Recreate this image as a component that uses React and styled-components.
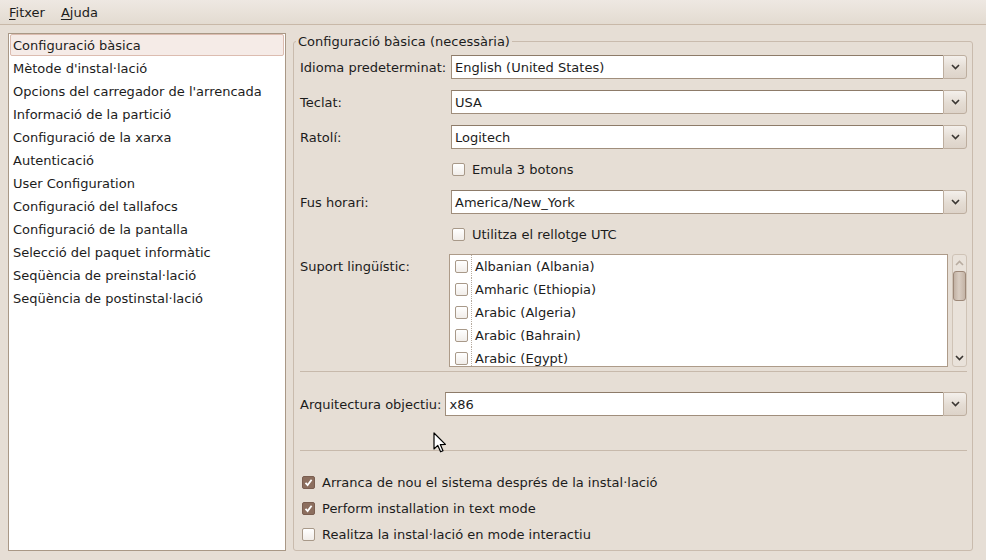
import React from 'react';
import styled, { createGlobalStyle, css } from 'styled-components';

const Global = createGlobalStyle`
  html, body {
    margin: 0;
    padding: 0;
    background: #e6ded5;
    font-family: "DejaVu Sans", "Liberation Sans", sans-serif;
    font-size: 13px;
    color: #1c1c1c;
  }
`;

const Window = styled.div`
  width: 986px;
  height: 560px;
  display: flex;
  flex-direction: column;
  position: relative;
  overflow: hidden;
  background: #e6ded5;
`;

const MenuBar = styled.div`
  height: 24px;
  display: flex;
  align-items: center;
  padding-left: 3px;
  background: linear-gradient(#eee8e2, #e3dbd1);
  border-bottom: 1px solid #c8b8a8;
`;

const MenuItem = styled.div`
  padding: 0 6px;
  margin-right: 4px;
  u { text-decoration: underline; text-underline-offset: 2px; }
`;

const Body = styled.div`
  flex: 1;
  display: flex;
  gap: 7px;
  padding: 8px 13px 9px 8px;
`;

const SideList = styled.div`
  width: 274px;
  border: 1px solid #a99886;
  background: #fff;
  padding: 0 1px 1px 1px;
  display: flex;
  flex-direction: column;
`;

const SideItem = styled.div`
  height: 23px;
  display: flex;
  align-items: center;
  padding-left: 2px;
  box-sizing: border-box;
  border: 1px solid transparent;
  border-radius: 2px;
  ${p => p.$active && css`
    height: 22px;
    margin-bottom: 1px;
    background: #f5ebe7;
    border-color: #dcbcb0;
  `}
`;

const Frame = styled.fieldset`
  flex: 1;
  margin: 0;
  padding: 5px 5px 5px 6px;
  border: 1px solid #c9bbad;
  border-radius: 3px;
  display: flex;
  flex-direction: column;
  min-width: 0;
`;

const Legend = styled.legend`
  padding: 0 2px 0 2px;
  margin-left: -4px;
  line-height: 17px;
`;

const Group = styled.div`
  display: flex;
  flex-direction: column;
  gap: ${p => p.$gap || 11}px;
  margin-top: ${p => p.$top || 0}px;
`;

const Row = styled.div`
  display: flex;
  align-items: ${p => (p.$top ? 'flex-start' : 'center')};
  margin-top: ${p => p.$mt || 0}px;
`;

const Label = styled.div`
  width: ${p => (p.$auto ? 'auto' : '151px')};
  margin-right: ${p => (p.$auto ? '4px' : '0')};
  padding-top: ${p => (p.$top ? '5px' : '0')};
  flex-shrink: 0;
`;

const Combo = styled.div`
  flex: 1;
  height: 24px;
  display: flex;
`;

const ComboField = styled.div`
  flex: 1;
  background: #fff;
  border: 1px solid #a08e7c;
  border-top-color: #8d7b69;
  border-right: none;
  display: flex;
  align-items: center;
  padding-left: 3px;
`;

const ComboButton = styled.div`
  width: 24px;
  box-sizing: border-box;
  border: 1px solid #bdae9f;
  border-radius: 0 3px 3px 0;
  background: linear-gradient(#f4f0ec, #e4dcd3 55%, #ddd3c9);
  display: flex;
  align-items: center;
  justify-content: center;
`;

const CheckRow = styled.div`
  height: 19px;
  display: flex;
  align-items: center;
  gap: 7px;
  padding-left: ${p => p.$indent || 0}px;
`;

const Box = styled.span`
  width: 13px;
  height: 13px;
  box-sizing: border-box;
  border: 1px solid #a89989;
  border-radius: 2px;
  background: linear-gradient(#fff, #f1ede9);
  display: flex;
  align-items: center;
  justify-content: center;
  flex-shrink: 0;
  ${p => p.$checked && css`
    background: #8c6e5e;
    border-color: #7a5e50;
  `}
`;

const ListWrap = styled.div`
  flex: 1;
  display: flex;
  gap: 4px;
  margin-left: -2px;
`;

const LangList = styled.div`
  flex: 1;
  height: 113px;
  box-sizing: border-box;
  background: #fff;
  border: 1px solid #ad9b89;
  overflow: hidden;
`;

const LangItem = styled.div`
  height: 23px;
  display: flex;
  align-items: center;
  padding-left: 5px;
`;

const Divider = styled.span`
  align-self: stretch;
  border-left: 1px dotted #b7aca0;
  margin: 0 3px 0 3px;
`;

const ScrollBar = styled.div`
  width: 15px;
  height: 113px;
  box-sizing: border-box;
  border: 1px solid #cfc3b6;
  border-radius: 3px;
  background: #e9e2da;
  display: flex;
  flex-direction: column;
  align-items: center;
  padding: 1px;
`;

const Arrow = styled.div`
  height: 14px;
  display: flex;
  align-items: center;
  justify-content: center;
`;

const Thumb = styled.div`
  width: 13px;
  height: 30px;
  box-sizing: border-box;
  border: 1px solid #9d8878;
  border-radius: 3px;
  background: linear-gradient(90deg, #c2b2a4, #d9cdc2 45%, #c4b4a6);
  margin-top: 1px;
`;

const Track = styled.div`
  flex: 1;
`;

const Separator = styled.div`
  height: 1px;
  background: #c7b9ab;
  margin: ${p => p.$m || '0'};
`;

const Cursor = styled.svg`
  position: absolute;
  left: 433px;
  top: 432px;
`;

const Chevron = ({ color = '#3a3632', up }) => (
  <svg width="9" height="6" viewBox="0 0 9 6">
    <path d={up ? 'M1 5 L4.5 1.5 L8 5' : 'M1 1 L4.5 4.5 L8 1'} fill="none" stroke={color} strokeWidth="1.6" />
  </svg>
);

const Check = ({ checked, indent, children }) => (
  <CheckRow $indent={indent}>
    <Box $checked={checked}>
      {checked && (
        <svg width="9" height="9" viewBox="0 0 9 9">
          <path d="M1.5 4.8 L3.6 7 L7.6 1.8" fill="none" stroke="#fff" strokeWidth="1.8" />
        </svg>
      )}
    </Box>
    <span>{children}</span>
  </CheckRow>
);

const ComboRow = ({ label, value, auto }) => (
  <Row>
    <Label $auto={auto}>{label}</Label>
    <Combo>
      <ComboField>{value}</ComboField>
      <ComboButton><Chevron /></ComboButton>
    </Combo>
  </Row>
);

const sections = [
  'Configuració bàsica',
  "Mètode d'instal·lació",
  "Opcions del carregador de l'arrencada",
  'Informació de la partició',
  'Configuració de la xarxa',
  'Autenticació',
  'User Configuration',
  'Configuració del tallafocs',
  'Configuració de la pantalla',
  'Selecció del paquet informàtic',
  'Seqüència de preinstal·lació',
  'Seqüència de postinstal·lació',
];

const languages = [
  'Albanian (Albania)',
  'Amharic (Ethiopia)',
  'Arabic (Algeria)',
  'Arabic (Bahrain)',
  'Arabic (Egypt)',
];

export default function App() {
  return (
    <Window>
      <Global />
      <MenuBar>
        <MenuItem><u>F</u>itxer</MenuItem>
        <MenuItem><u>A</u>juda</MenuItem>
      </MenuBar>
      <Body>
        <SideList>
          {sections.map((s, i) => (
            <SideItem key={s} $active={i === 0}>{s}</SideItem>
          ))}
        </SideList>
        <Frame>
          <Legend>Configuració bàsica (necessària)</Legend>
          <Group>
            <ComboRow label="Idioma predeterminat:" value="English (United States)" />
            <ComboRow label="Teclat:" value="USA" />
            <ComboRow label="Ratolí:" value="Logitech" />
            <Check indent={152}>Emula 3 botons</Check>
            <ComboRow label="Fus horari:" value="America/New_York" />
            <Check indent={152}>Utilitza el rellotge UTC</Check>
          </Group>
          <Row $top $mt={10}>
            <Label $top>Suport lingüístic:</Label>
            <ListWrap>
              <LangList>
                {languages.map(l => (
                  <LangItem key={l}>
                    <Box />
                    <Divider />
                    <span>{l}</span>
                  </LangItem>
                ))}
              </LangList>
              <ScrollBar>
                <Arrow><Chevron up color="#b8aca0" /></Arrow>
                <Thumb />
                <Track />
                <Arrow><Chevron /></Arrow>
              </ScrollBar>
            </ListWrap>
          </Row>
          <Separator $m="4px 0 0 0" />
          <Group $top={20}>
            <ComboRow auto label="Arquitectura objectiu:" value="x86" />
          </Group>
          <Separator $m="34px 0 0 0" />
          <Group $top={22} $gap={7}>
            <Check checked indent={2}>Arranca de nou el sistema després de la instal·lació</Check>
            <Check checked indent={2}>Perform installation in text mode</Check>
            <Check indent={2}>Realitza la instal·lació en mode interactiu</Check>
          </Group>
        </Frame>
      </Body>
      <Cursor width="14" height="22" viewBox="0 0 14 22">
        <path d="M1 1 L1 17 L4.8 13.4 L7.6 19.8 L10 18.8 L7.3 12.6 L12.4 12.4 Z" fill="#fff" stroke="#000" strokeWidth="1.2" strokeLinejoin="round" />
      </Cursor>
    </Window>
  );
}
